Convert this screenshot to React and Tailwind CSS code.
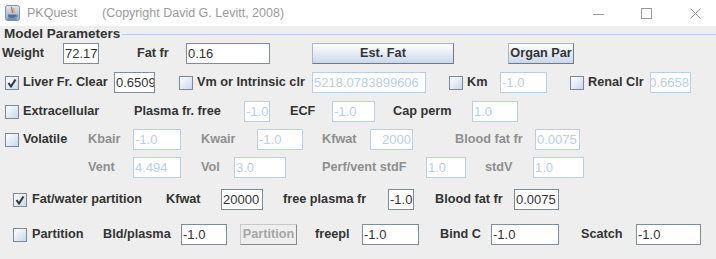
import React from 'react';

const font = { fontFamily: '"Liberation Sans", Arial, sans-serif' };

const Label = ({ children, className = '', dim }) => (
  <span
    className={`shrink-0 font-bold text-[12.7px] leading-none whitespace-nowrap ${dim ? 'text-[#8e8e8e]' : 'text-[#333333]'} ${className}`}
  >
    {children}
  </span>
);

const Field = ({ value, className = '', disabled, right }) => (
  <div
    className={`shrink-0 h-[21px] bg-white border flex items-center overflow-hidden px-[1px] text-[13px] whitespace-nowrap ${right ? 'justify-end' : 'justify-start'} ${disabled ? 'border-[#b8cfe5] text-[#b8cfe5]' : 'border-[#7f8c99] text-[#333333]'} ${className}`}
  >
    <span className="shrink-0">{value}</span>
  </div>
);

const Check = ({ checked, className = '' }) => (
  <div
    className={`shrink-0 w-[14px] h-[14px] border border-[#7a8a99] bg-gradient-to-br from-white to-[#c9d8e8] flex items-center justify-center ${className}`}
  >
    {checked && (
      <svg width="10" height="10" viewBox="0 0 10 10">
        <path d="M1.5 5 L4 8.5 L8.5 1.5" stroke="#333" strokeWidth="2" fill="none" />
      </svg>
    )}
  </div>
);

const Button = ({ children, className = '', disabled }) => (
  <div
    className={`shrink-0 h-[21px] flex items-center justify-center font-bold text-[12.7px] border ${
      disabled
        ? 'bg-[#eeeeee] border-[#c8c8c8] border-r-[#8a8a8a] border-b-[#8a8a8a] text-[#a6a6a6]'
        : 'bg-gradient-to-b from-white to-[#c9d9ea] border-[#a9b7c6] border-r-[#6d7986] border-b-[#6d7986] text-[#333333]'
    } ${className}`}
  >
    {children}
  </div>
);

export default function App() {
  return (
    <div className="w-[716px] h-[259px] bg-[#eeeeee] overflow-hidden" style={font}>
      {/* title bar */}
      <div className="h-[26px] bg-white flex items-center relative">
        <svg className="ml-[5px] shrink-0" width="15" height="16" viewBox="0 0 15 16">
          <defs>
            <linearGradient id="jg" x1="0" y1="0" x2="0" y2="1">
              <stop offset="0" stopColor="#dfe9f4" />
              <stop offset="1" stopColor="#8fa9c6" />
            </linearGradient>
          </defs>
          <rect x="0.5" y="0.5" width="14" height="15" rx="2" fill="url(#jg)" stroke="#7d95b3" />
          <path d="M7 2 C5 4 9 5 7 8" stroke="#e06a1b" strokeWidth="1.4" fill="none" />
          <path d="M9 3 C8 5 10 6 8.5 8" stroke="#e8902f" strokeWidth="1" fill="none" />
          <path d="M3 9.5 H11 V11 C11 12.5 9.5 13 7 13 C4.5 13 3 12.5 3 11 Z" fill="#4f6f9a" />
          <path d="M11 10 C13 10 13 12 11 12" stroke="#4f6f9a" strokeWidth="1" fill="none" />
          <rect x="2.5" y="13.5" width="9" height="1" fill="#4f6f9a" />
        </svg>
        <span className="ml-[7px] text-[12.5px] text-[#9a9a9a]">PKQuest</span>
        <span className="ml-[25px] text-[12.5px] text-[#9a9a9a]">(Copyright David G. Levitt, 2008)</span>
        <div className="ml-auto flex items-center">
          <div className="w-[11px] h-px bg-[#9a9a9a] mt-[2px]" />
          <div className="ml-[37px] w-[11px] h-[11px] border border-[#9a9a9a]" />
          <svg className="ml-[38px] mr-[15px]" width="11" height="11" viewBox="0 0 11 11">
            <path d="M0.5 0.5 L10.5 10.5 M10.5 0.5 L0.5 10.5" stroke="#9a9a9a" strokeWidth="1" />
          </svg>
        </div>
      </div>

      {/* heading */}
      <div className="h-[17px] flex items-center">
        <span className="ml-[4px] font-bold text-[13.5px] text-[#333333] whitespace-nowrap">Model Parameters</span>
        <div className="ml-[2px] flex-1 h-px bg-[#b8cfe5] -mt-[1px]" />
      </div>

      {/* row 1 */}
      <div className="h-[21px] flex items-center">
        <Label className="ml-[2px] w-[61px]">Weight</Label>
        <Field className="w-[36px]" value="72.17" />
        <Label className="ml-[38px] w-[49px]">Fat fr</Label>
        <Field className="w-[84px]" value="0.16" />
        <Button className="ml-[42px] w-[142px] h-[20px]">Est. Fat</Button>
        <Button className="ml-[54px] w-[66px] h-[20px]">Organ Par</Button>
      </div>

      {/* row 2 */}
      <div className="mt-[8px] h-[21px] flex items-center">
        <Check className="ml-[5px]" checked />
        <Label className="ml-[4px] w-[91px]">Liver Fr. Clear</Label>
        <Field className="w-[41px]" value="0.6509" />
        <Check className="ml-[24px]" />
        <Label className="ml-[4px] w-[115px]">Vm or Intrinsic clr</Label>
        <Field className="w-[114px]" value="5218.0783899606" disabled />
        <Check className="ml-[23px]" />
        <Label className="ml-[4px] w-[33px]">Km</Label>
        <Field className="w-[47px]" value="-1.0" disabled />
        <Check className="ml-[23px]" />
        <Label className="ml-[4px] w-[62px]">Renal Clr</Label>
        <Field className="w-[41px]" value="0.6658" disabled right />
      </div>

      {/* row 3 */}
      <div className="mt-[8px] h-[21px] flex items-center">
        <Check className="ml-[5px]" />
        <Label className="ml-[4px] w-[111px]">Extracellular</Label>
        <Label className="w-[110px]">Plasma fr. free</Label>
        <Field className="w-[26px]" value="-1.0" disabled />
        <Label className="ml-[20px] w-[42px]">ECF</Label>
        <Field className="w-[43px]" value="-1.0" disabled />
        <Label className="ml-[18px] w-[79px]">Cap perm</Label>
        <Field className="w-[46px]" value="1.0" disabled />
      </div>

      {/* row 4 */}
      <div className="mt-[7px] h-[21px] flex items-center">
        <Check className="ml-[5px]" />
        <Label className="ml-[4px] w-[65px]">Volatile</Label>
        <Label className="w-[45px]" dim>Kbair</Label>
        <Field className="w-[48px]" value="-1.0" disabled />
        <Label className="ml-[20px] w-[56px]" dim>Kwair</Label>
        <Field className="w-[46px]" value="-1.0" disabled />
        <Label className="ml-[19px] w-[48px]" dim>Kfwat</Label>
        <Field className="w-[43px]" value="2000" disabled right />
        <Label className="ml-[42px] w-[80px]" dim>Blood fat fr</Label>
        <Field className="w-[45px]" value="0.0075" disabled />
      </div>

      {/* row 5 */}
      <div className="mt-[7px] h-[21px] flex items-center">
        <Label className="ml-[88px] w-[45px]" dim>Vent</Label>
        <Field className="w-[48px]" value="4.494" disabled />
        <Label className="ml-[20px] w-[33px]" dim>Vol</Label>
        <Field className="w-[52px]" value="3.0" disabled />
        <Label className="ml-[36px] w-[104px]" dim>Perf/vent stdF</Label>
        <Field className="w-[40px]" value="1.0" disabled />
        <Label className="ml-[19px] w-[48px]" dim>stdV</Label>
        <Field className="w-[51px]" value="1.0" disabled />
      </div>

      {/* row 6 */}
      <div className="mt-[11px] h-[21px] flex items-center">
        <Check className="ml-[13px]" checked />
        <Label className="ml-[5px] w-[134px]">Fat/water partition</Label>
        <Label className="w-[55px]">Kfwat</Label>
        <Field className="w-[42px]" value="20000" />
        <Label className="ml-[20px] w-[105px]">free plasma fr</Label>
        <Field className="w-[26px]" value="-1.0" />
        <Label className="ml-[21px] w-[79px]">Blood fat fr</Label>
        <Field className="w-[45px]" value="0.0075" />
      </div>

      {/* row 7 */}
      <div className="mt-[14px] h-[21px] flex items-center">
        <Check className="ml-[13px]" />
        <Label className="ml-[5px] w-[71px]">Partition</Label>
        <Label className="w-[78px]">Bld/plasma</Label>
        <Field className="w-[46px]" value="-1.0" />
        <Button className="ml-[13px] w-[57px]" disabled>Partition</Button>
        <Label className="ml-[18px] w-[47px]">freepl</Label>
        <Field className="w-[57px]" value="-1.0" />
        <Label className="ml-[21px] w-[51px]">Bind C</Label>
        <Field className="w-[68px]" value="-1.0" />
        <Label className="ml-[22px] w-[55px]">Scatch</Label>
        <Field className="w-[65px]" value="-1.0" />
      </div>
    </div>
  );
}
